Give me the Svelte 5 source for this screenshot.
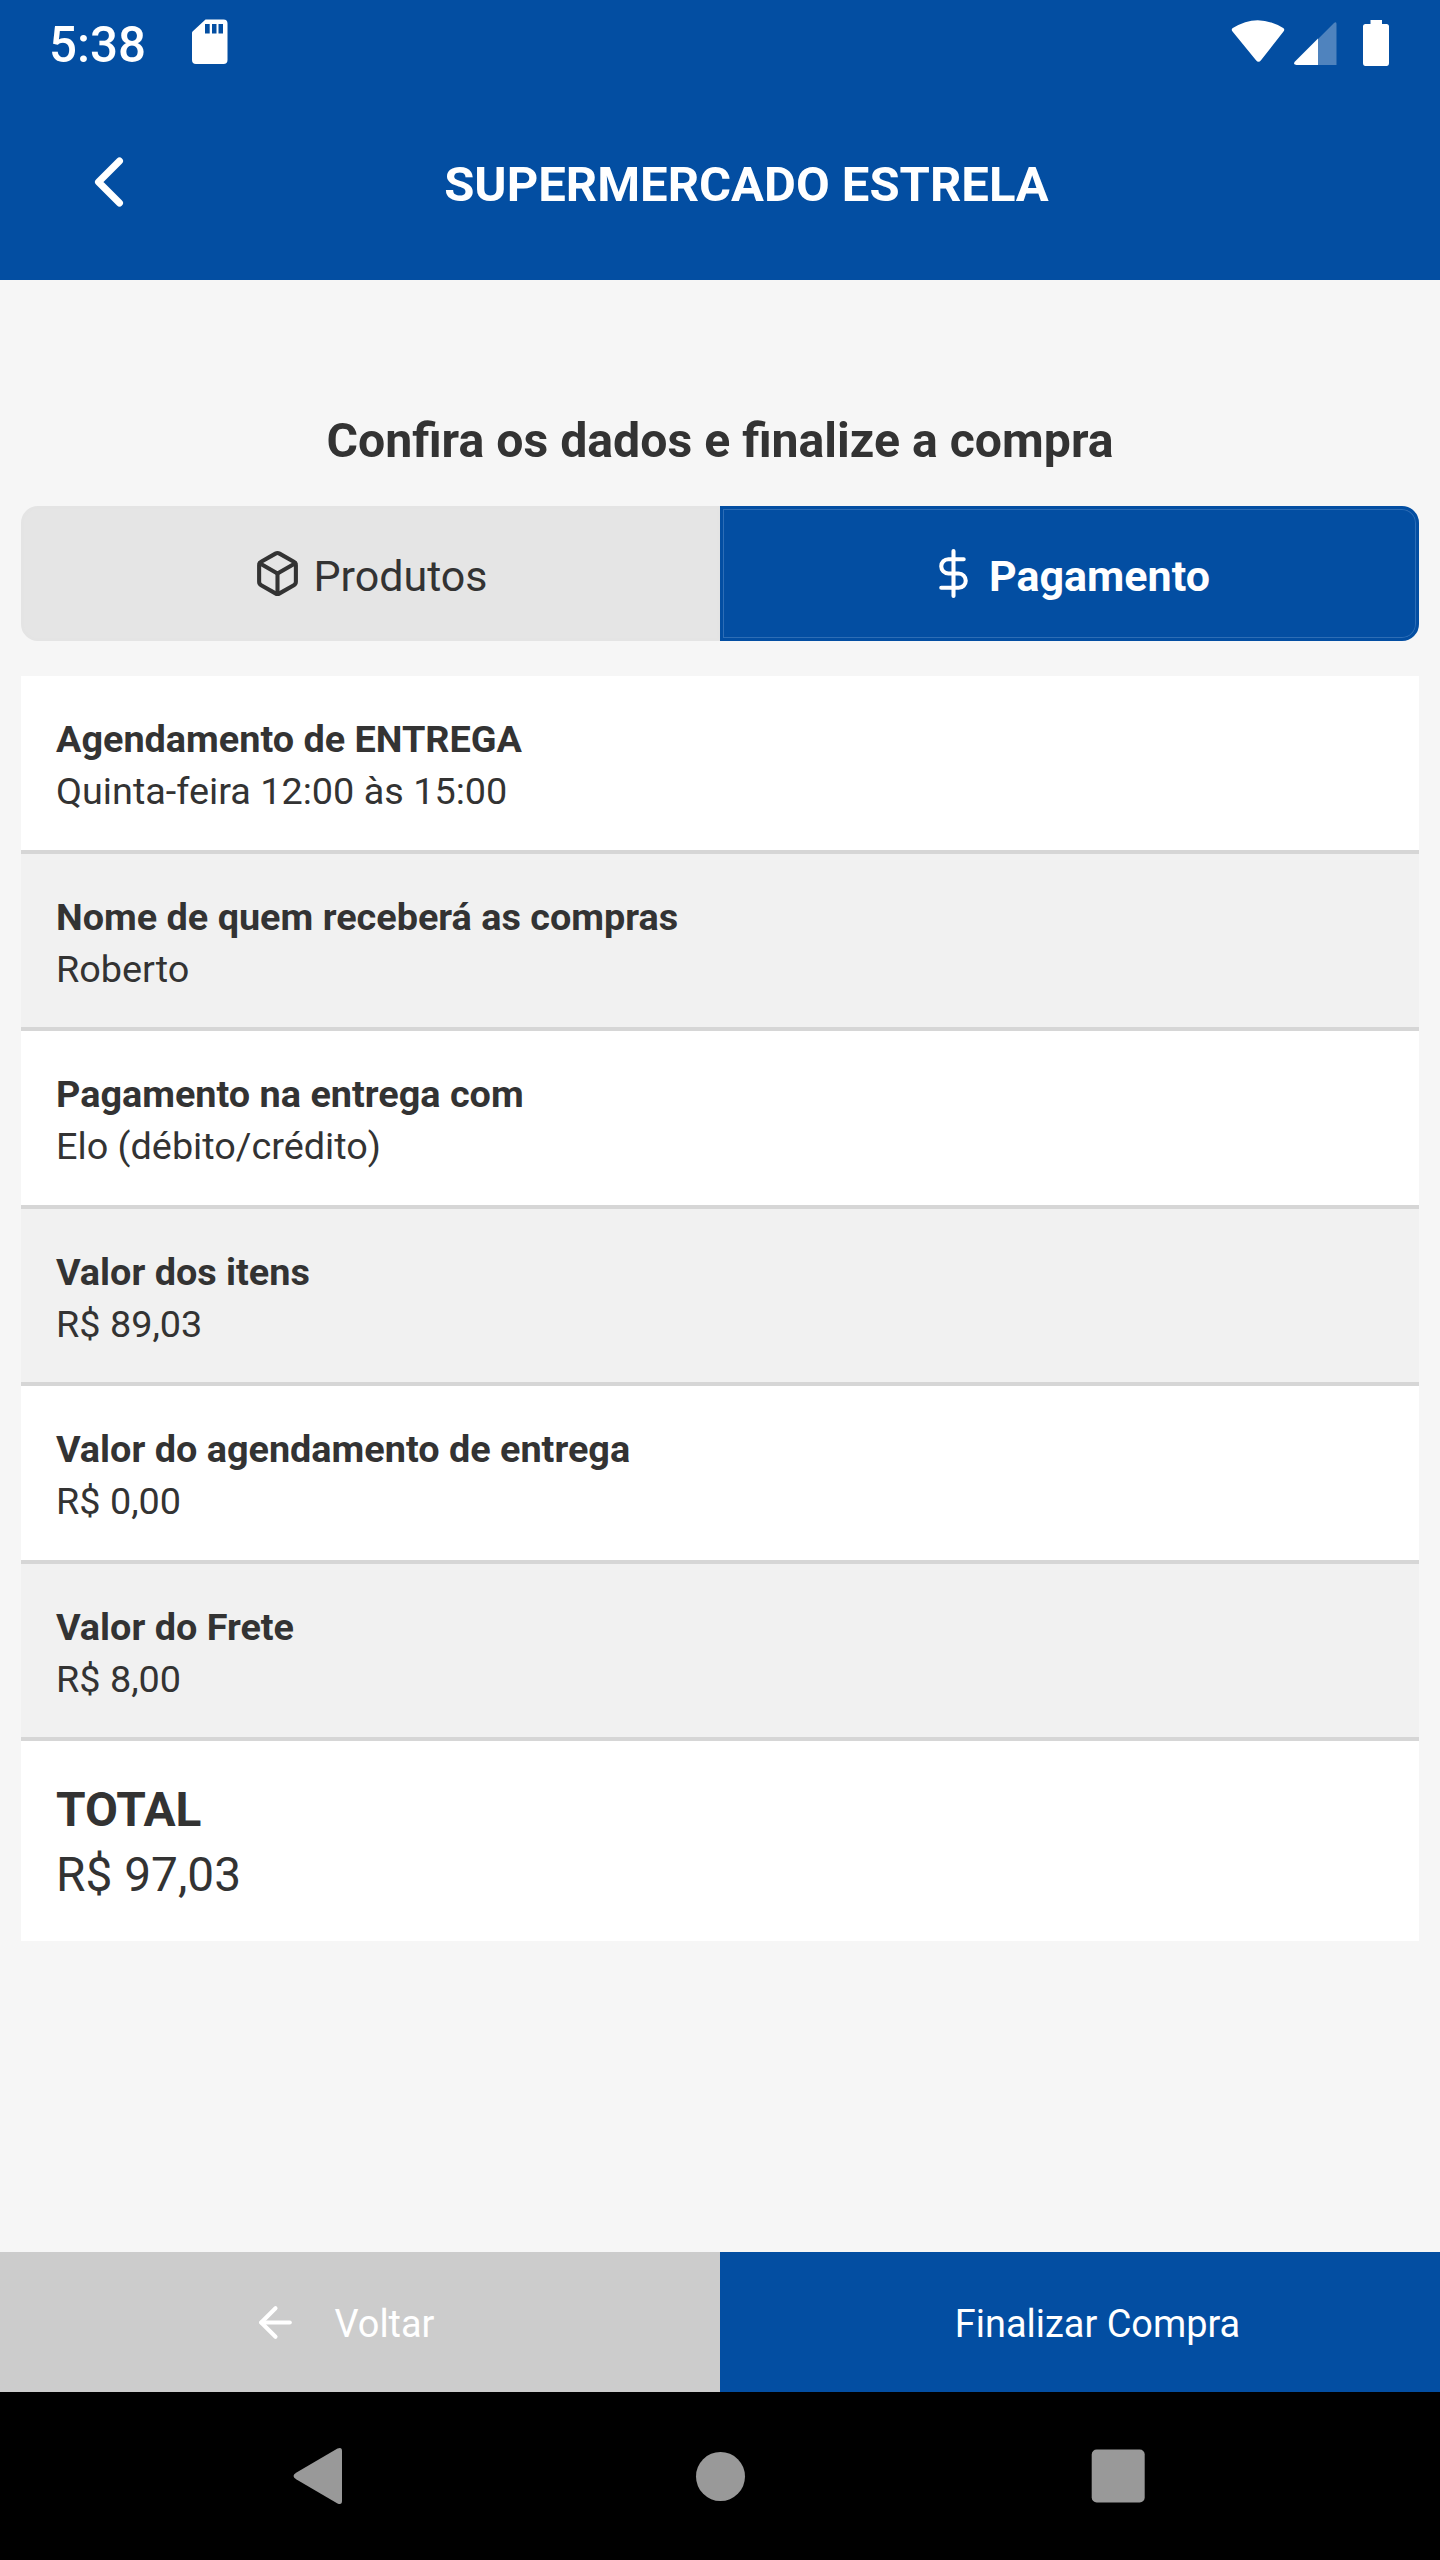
<script>
  const rows = [
    { label: 'Agendamento de ENTREGA', value: 'Quinta-feira 12:00 às 15:00' },
    { label: 'Nome de quem receberá as compras', value: 'Roberto' },
    { label: 'Pagamento na entrega com', value: 'Elo (débito/crédito)' },
    { label: 'Valor dos itens', value: 'R$ 89,03' },
    { label: 'Valor do agendamento de entrega', value: 'R$ 0,00' },
    { label: 'Valor do Frete', value: 'R$ 8,00' }
  ];
</script>

<div class="screen">
  <div class="status">
    <span class="clock">5:38</span>
    <svg class="sd" width="36" height="46" viewBox="0 0 36 46" fill="#fff">
      <path fill-rule="evenodd" d="M13.5 .5H31.5Q35.5 .5 35.5 4.5V41Q35.5 45 31.5 45H4Q0 45 0 41V14Q0 13 .8 12.200ZM13 5V14.500H17.700V5ZM20 5V14.500H24.500V5ZM26.500 5V14.500H31V5Z" />
    </svg>
    <svg class="signals" width="160" height="48" viewBox="0 0 160 48" fill="#fff">
      <path d="M2.500 12.600Q.8 10.600 2.800 9.100Q27.500 -6.800 53.200 9.100Q55.200 10.600 53.500 12.600L31 41.300Q28.500 44.300 26 41.300Z" />
      <path d="M103.500 4.600Q106.500 1.500 106.500 5V46H88V20Z" fill-opacity=".3" />
      <path d="M88 19.500V46H66.500Q62.500 45.500 65 42.500Z" />
      <path d="M140.500 1H152V5H156.500Q159 5 159 7.500V44Q159 47 156.500 47H135.500Q133 47 133 44V7.500Q133 5 135.500 5H140.500Z" />
    </svg>
  </div>

  <header class="header">
    <svg class="back" width="84" height="84" viewBox="0 0 24 24">
      <polyline points="15 18 9 12 15 6" />
    </svg>
    <h1>SUPERMERCADO ESTRELA</h1>
  </header>

  <main class="content">
    <h2>Confira os dados e finalize a compra</h2>

    <div class="tabs">
      <div class="tab">
        <svg width="49" height="49" viewBox="0 0 24 24">
          <path d="M21 16V8a2 2 0 0 0-1-1.730l-7-4a2 2 0 0 0-2 0l-7 4A2 2 0 0 0 3 8v8a2 2 0 0 0 1 1.730l7 4a2 2 0 0 0 2 0l7-4A2 2 0 0 0 21 16z" />
          <polyline points="3.270 6.960 12 12.010 20.730 6.960" />
          <line x1="12" y1="22.080" x2="12" y2="12" />
        </svg>
        <span>Produtos</span>
      </div>
      <div class="tab active">
        <svg width="49" height="49" viewBox="0 0 24 24">
          <line x1="12" y1="1" x2="12" y2="23" />
          <path d="M17 5H9.500a3.500 3.500 0 0 0 0 7h5a3.500 3.500 0 0 1 0 7H6" />
        </svg>
        <span>Pagamento</span>
      </div>
    </div>

    <dl class="list">
      {#each rows as row}
        <div class="row">
          <dt>{row.label}</dt>
          <dd>{row.value}</dd>
        </div>
      {/each}
      <div class="row total">
        <dt>TOTAL</dt>
        <dd>R$ 97,03</dd>
      </div>
    </dl>
  </main>

  <div class="actions">
    <div class="action secondary">
      <svg width="49" height="49" viewBox="0 0 24 24">
        <line x1="19" y1="12" x2="5" y2="12" />
        <polyline points="12 19 5 12 12 5" />
      </svg>
      <span>Voltar</span>
    </div>
    <div class="action primary"><span>Finalizar Compra</span></div>
  </div>

  <nav class="nav">
    <svg width="60" height="60" viewBox="0 0 60 60">
      <path d="M6.500 26.500L47.500 2.600Q52 .8 52 5V55Q52 59.200 47.500 57.400L6.500 33.500Q.5 30 6.500 26.500Z" />
    </svg>
    <svg width="60" height="60" viewBox="0 0 60 60"><circle cx="31.500" cy="30.500" r="24.500" /></svg>
    <svg width="60" height="60" viewBox="0 0 60 60"><rect x="3.700" y="3.500" width="53" height="53" rx="5" /></svg>
  </nav>
</div>

<style>
  :global(body) {
    margin: 0;
    background: #f6f6f6;
  }
  .screen {
    width: 1440px;
    height: 2560px;
    display: flex;
    flex-direction: column;
    background: #f6f6f6;
    color: #333;
    font-family: Roboto, sans-serif;
  }
  svg {
    display: block;
    flex: none;
  }
  .status {
    height: 84px;
    display: flex;
    align-items: flex-start;
    box-sizing: border-box;
    padding: 19px 50px 0 49px;
    background: #034ea2;
    color: #fff;
  }
  .clock {
    width: 143px;
    padding-top: 1px;
    font-size: 49.300px;
    font-weight: 500;
    line-height: 50px;
  }
  .signals {
    margin-left: auto;
  }
  .header {
    height: 196px;
    display: grid;
    grid-template-columns: 84px 1fr;
    align-items: center;
    box-sizing: border-box;
    padding: 0 14px 0 67px;
    background: #034ea2;
    color: #fff;
  }
  .back,
  .tab svg,
  .action svg {
    fill: none;
    stroke: currentColor;
    stroke-width: 2;
    stroke-linecap: round;
    stroke-linejoin: round;
  }
  h1 {
    margin: 0;
    padding: 5px 84px 0 0;
    text-align: center;
    font-size: 49px;
    font-weight: 700;
    line-height: 60px;
  }
  .content {
    flex: 1;
    padding: 131px 21px 0;
  }
  h2 {
    margin: 0 0 35px;
    text-align: center;
    font-size: 48.200px;
    font-weight: 700;
    line-height: 60px;
  }
  .tabs {
    display: grid;
    grid-template-columns: 1fr 1fr;
    height: 135px;
  }
  .tab {
    display: flex;
    align-items: center;
    justify-content: center;
    gap: 11px;
    box-sizing: border-box;
    border: 3px solid #e4e4e4;
    border-radius: 17px 0 0 17px;
    background: #e5e5e5;
    font-size: 43px;
  }
  .tab span {
    padding-top: 4px;
    line-height: 50px;
  }
  .tab.active {
    border-color: #034ea2;
    border-radius: 0 17px 17px 0;
    background: #034ea2;
    box-shadow: inset 0 0 0 1px #2d6db5;
    color: #fff;
    font-weight: 700;
  }
  .list {
    display: grid;
    grid-template-rows: 178px 177px 178px 177px 178px 177px 200px;
    margin: 35px 0 0;
  }
  .row {
    box-sizing: border-box;
    padding: 37px 35px 0;
    border-bottom: 4px solid #d6d6d6;
    background: #fff;
    font-size: 37.800px;
    line-height: 52px;
  }
  .row:nth-child(even) {
    background: #f1f1f1;
  }
  .row.total {
    border-bottom: 0;
    font-size: 47.800px;
    line-height: 65px;
  }
  dt {
    font-weight: 700;
  }
  dd {
    margin: 0;
  }
  .actions {
    display: grid;
    grid-template-columns: 1fr 1fr;
    height: 140px;
  }
  .action {
    display: flex;
    align-items: center;
    justify-content: center;
    color: #fff;
    font-size: 37.900px;
    line-height: 50px;
  }
  .action span {
    padding-top: 3px;
  }
  .secondary {
    background: #ccc;
  }
  .secondary span {
    margin: 0 35px;
  }
  .primary {
    background: #034ea2;
  }
  .primary span {
    margin-left: 35px;
  }
  .nav {
    height: 168px;
    display: flex;
    align-items: center;
    justify-content: space-between;
    box-sizing: border-box;
    padding: 0 292px 0 290px;
    background: #000;
  }
  .nav svg {
    fill: #999;
  }
</style>
